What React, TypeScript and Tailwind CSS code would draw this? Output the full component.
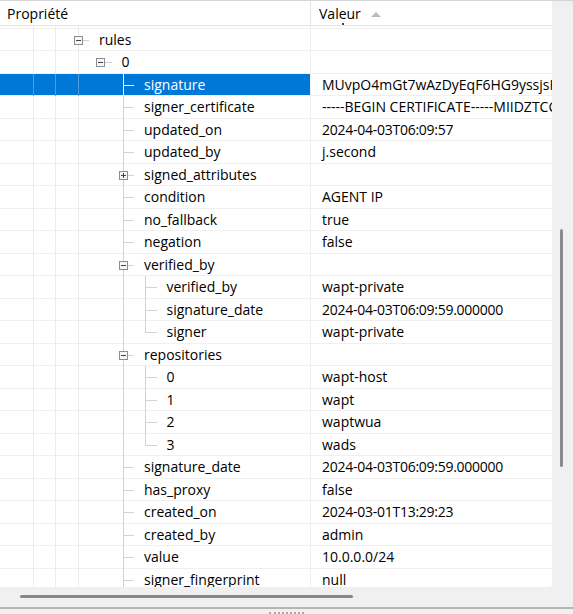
import React from 'react'

type Guide = '' | 'f' | 'l' | 't' | 'c' | 'mf' | 'm' | 'pl' | 'ml'

interface Row {
  label: string
  value?: string
  guides: Guide[]
  selected?: boolean
}

// c0, c1, c2 are ancestor columns, c3 is the "0" node column (last child, no line)
const L3: Guide[] = ['f', 'f', 'f', '']
const L4: Guide[] = ['f', 'f', 'f', '', 'l']

const rows: Row[] = [
  { label: 'rules', guides: ['f', 'f', 'mf'] },
  { label: '0', guides: ['f', 'f', 'f', 'm'] },
  { label: 'signature', value: 'MUvpO4mGt7wAzDyEqF6HG9yssjsKx2', guides: [...L3, 't'], selected: true },
  { label: 'signer_certificate', value: '-----BEGIN CERTIFICATE-----MIIDZTCCAk2gAwIBAgIU', guides: [...L3, 't'] },
  { label: 'updated_on', value: '2024-04-03T06:09:57', guides: [...L3, 't'] },
  { label: 'updated_by', value: 'j.second', guides: [...L3, 't'] },
  { label: 'signed_attributes', guides: [...L3, 'pl'] },
  { label: 'condition', value: 'AGENT IP', guides: [...L3, 't'] },
  { label: 'no_fallback', value: 'true', guides: [...L3, 't'] },
  { label: 'negation', value: 'false', guides: [...L3, 't'] },
  { label: 'verified_by', guides: [...L3, 'ml'] },
  { label: 'verified_by', value: 'wapt-private', guides: [...L4, 't'] },
  { label: 'signature_date', value: '2024-04-03T06:09:59.000000', guides: [...L4, 't'] },
  { label: 'signer', value: 'wapt-private', guides: [...L4, 'c'] },
  { label: 'repositories', guides: [...L3, 'ml'] },
  { label: '0', value: 'wapt-host', guides: [...L4, 't'] },
  { label: '1', value: 'wapt', guides: [...L4, 't'] },
  { label: '2', value: 'waptwua', guides: [...L4, 't'] },
  { label: '3', value: 'wads', guides: [...L4, 'c'] },
  { label: 'signature_date', value: '2024-04-03T06:09:59.000000', guides: [...L3, 't'] },
  { label: 'has_proxy', value: 'false', guides: [...L3, 't'] },
  { label: 'created_on', value: '2024-03-01T13:29:23', guides: [...L3, 't'] },
  { label: 'created_by', value: 'admin', guides: [...L3, 't'] },
  { label: 'value', value: '10.0.0.0/24', guides: [...L3, 't'] },
  { label: 'signer_fingerprint', value: 'null', guides: [...L3, 't'] },
]

const H = 22.5
const CX = 11.25
const CY = 11.25

const isDate = (v?: string) => !!v && /^\d{4}-\d{2}-\d{2}T/.test(v)

function GuideCell({ kind, selected, height = H }: { kind: Guide; selected?: boolean; height?: number }) {
  const faint = selected ? '#4a9ce3' : '#ececec'
  const tree = selected ? '#ffffff' : '#d2d2d2'
  const full = kind === 'l' || kind === 't' || kind === 'pl' || kind === 'ml'
  const stub = kind !== '' && kind !== 'f' && kind !== 'l'
  const button = kind === 'm' || kind === 'mf' || kind === 'pl' || kind === 'ml'
  return (
    <svg width={22.5} height={height} className="shrink-0" shapeRendering="crispEdges">
      {(kind === 'f' || kind === 'mf') && <line x1={CX} y1={0} x2={CX} y2={height} stroke={faint} />}
      {full && <line x1={CX} y1={0} x2={CX} y2={height} stroke={tree} />}
      {kind === 'c' && <line x1={CX} y1={0} x2={CX} y2={CY} stroke={tree} />}
      {stub && <line x1={CX} y1={CY} x2={22.5} y2={CY} stroke={tree} />}
      {button && (
        <g>
          <rect x={7.25} y={7.25} width={8} height={8} fill="#f6f6f6" stroke="#8e8e8e" />
          <line x1={8.75} y1={CY} x2={13.75} y2={CY} stroke="#33465c" />
          {kind === 'pl' && <line x1={CX} y1={8.75} x2={CX} y2={13.75} stroke="#33465c" />}
        </g>
      )}
    </svg>
  )
}

function TreeRow({ row }: { row: Row }) {
  return (
    <div className="flex h-[22.5px] shrink-0 border-b border-[#f0f0f0]">
      <div
        className={`flex w-[311px] shrink-0 border-r border-[#f0f0f0] ${
          row.selected ? 'bg-[#0078d7] text-white' : 'text-black'
        }`}
      >
        <div className="w-[21.75px] shrink-0" />
        {row.guides.map((g, i) => (
          <GuideCell key={i} kind={g} selected={row.selected} />
        ))}
        <div className="flex items-center pl-[9.75px] whitespace-nowrap">{row.label}</div>
      </div>
      <div
        className={`flex flex-1 items-center overflow-hidden pl-[11px] whitespace-nowrap text-black ${
          isDate(row.value) ? 'tracking-[-0.26px]' : ''
        }`}
      >
        {row.value}
      </div>
    </div>
  )
}

export default function App(): React.JSX.Element {
  return (
    <div className="flex h-[614px] w-[573px] flex-col overflow-hidden border-t border-[#d6d6d6] bg-[#f0f0f0] font-['Open_Sans',sans-serif] text-[14px]">
      <div className="flex h-[585.5px] shrink-0">
        <div className="flex w-[551.5px] shrink-0 flex-col overflow-hidden rounded-br-[3px] bg-white">
          {/* header */}
          <div className="flex h-[25px] shrink-0 border-b border-[#e5e5e5]">
            <div className="flex w-[311px] shrink-0 items-center border-r border-[#e5e5e5] pl-[7px] text-black">
              Propriété
            </div>
            <div className="relative flex flex-1 items-center gap-[10px] pl-[8px] text-black">
              <span>Valeur</span>
              <svg width="10" height="5" className="translate-y-[1px]">
                <polygon points="0,5 5,0 10,5" fill="#bcbcbc" />
              </svg>
              <span className="absolute left-[31px] top-[22px] h-[1.5px] w-[1.5px] bg-[#444]" />
            </div>
          </div>
          {/* partially scrolled-out row */}
          <div className="flex h-[2.55px] shrink-0 border-b border-[#f0f0f0]">
            <div className="flex w-[311px] shrink-0 border-r border-[#f0f0f0]">
              <div className="w-[21.75px] shrink-0" />
              {(['f', 'f', 'f'] as Guide[]).map((g, i) => (
                <GuideCell key={i} kind={g} height={2} />
              ))}
            </div>
          </div>
          {rows.map((r, i) => (
            <TreeRow key={i} row={r} />
          ))}
        </div>
        {/* vertical scrollbar */}
        <div className="flex-1 pl-[8.5px] pt-[228px]">
          <div className="h-[238px] w-[3px] rounded-full bg-[#8b8b8b]" />
        </div>
      </div>
      {/* horizontal scrollbar */}
      <div className="flex h-[20.5px] shrink-0 items-center pl-[20px]">
        <div className="h-[3px] w-[333px] rounded-full bg-[#878787]" />
      </div>
      <div className="h-[2px] shrink-0 bg-[#b4b4b4]" />
      <div className="flex flex-1 justify-center pt-[3px]">
        <div className="h-0 w-[35px] border-t-2 border-dotted border-[#a8a8a8]" />
      </div>
    </div>
  )
}
